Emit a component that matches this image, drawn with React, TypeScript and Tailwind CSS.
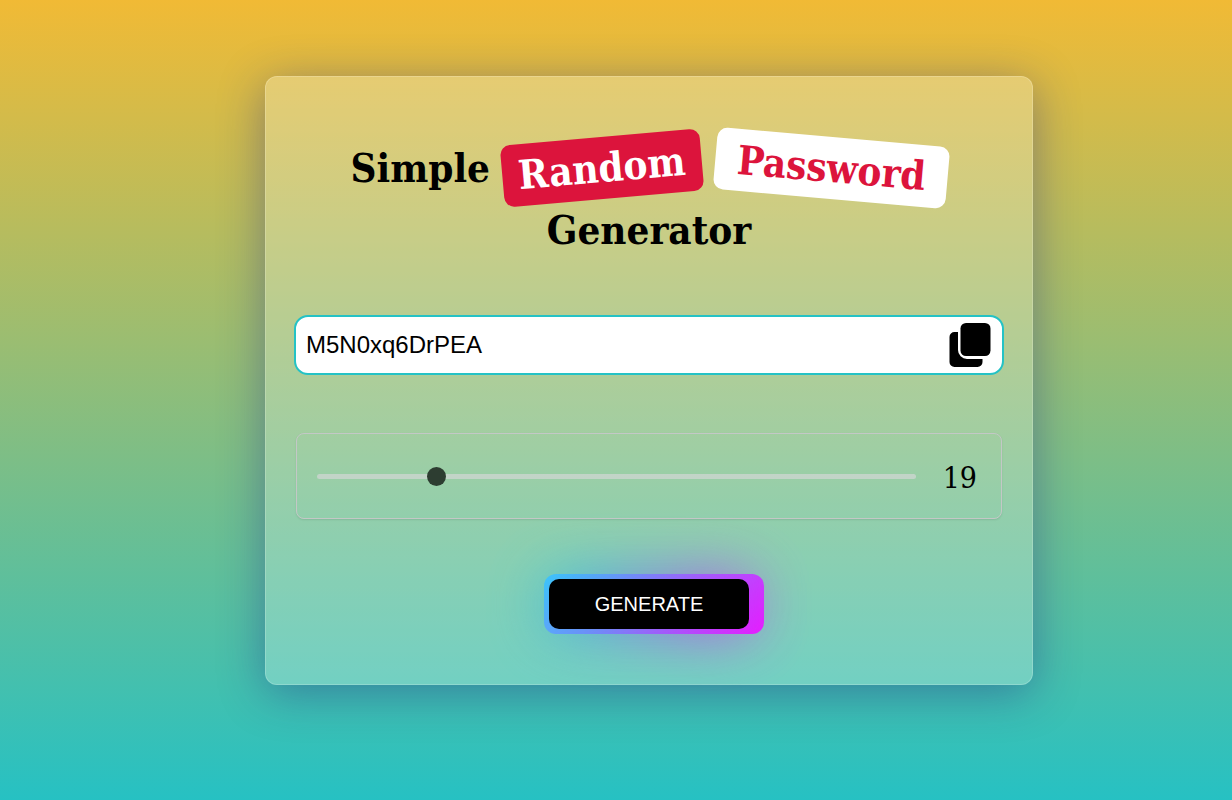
import { useState } from "react";

const CHARACTERS =
  "ABCDEFGHIJKLMNOPQRSTUVWXYZabcdefghijklmnopqrstuvwxyz0123456789";

function createPassword(length: number) {
  return Array.from(
    { length },
    () => CHARACTERS[Math.floor(Math.random() * CHARACTERS.length)],
  ).join("");
}

function CopyIcon() {
  return (
    <svg viewBox="0 0 42 44" className="h-11 w-[42px]" fill="currentColor" aria-hidden="true">
      <rect x="11.500" y="0" width="30" height="33" rx="5.500" />
      <path d="M9 9H5.500a5 5 0 0 0-5 5v25a5 5 0 0 0 5 5h23a5 5 0 0 0 5-5v-3H18a9 9 0 0 1-9-9z" />
    </svg>
  );
}

function Title() {
  return (
    <h1 className="text-center font-['DejaVu_Serif_Condensed','DejaVu_Serif',serif] text-[40px] leading-[62px] font-bold text-black">
      Simple{" "}
      <span className="inline-block -rotate-5 rounded-[10px] bg-[#dc143c] px-4 text-white">
        Random
      </span>{" "}
      <span className="inline-block rotate-5 rounded-[10px] bg-white px-[22px] text-[#dc143c]">
        Password
      </span>{" "}
      Generator
    </h1>
  );
}

export default function App() {
  const [length, setLength] = useState(19);
  const [password, setPassword] = useState("M5N0xq6DrPEA");

  return (
    <div className="flex min-h-screen items-start justify-center bg-[linear-gradient(180deg,#f1ba35,#26c1c3)] pt-[76px] pb-10 pl-[66px] font-['Liberation_Sans',Arial,sans-serif]">
      <main className="w-full max-w-3xl rounded-xl border border-white/20 bg-white/25 px-7 pt-[60px] pb-[50px] shadow-[0_8px_46px_rgba(31,38,135,0.42)]">
        <Title />

        <div className="mt-[54px] flex h-[60px] items-center rounded-[14px] border-2 border-[#24c2c5] bg-white pr-[11px]">
          <input
            type="text"
            readOnly
            aria-label="Generated password"
            value={password}
            className="h-full min-w-0 flex-1 rounded-[14px] bg-transparent px-[10px] text-2xl text-black outline-none"
          />
          <button
            type="button"
            aria-label="Copy password"
            onClick={() => navigator.clipboard?.writeText(password)}
            className="text-black"
          >
            <CopyIcon />
          </button>
        </div>

        <div className="mx-[2px] mt-[58px] flex h-[86px] items-center rounded-lg border border-[#c3c8c6] pr-6 pl-5 shadow-[0_1px_2px_rgba(0,0,0,0.1)]">
          <input
            id="length"
            type="range"
            min={0}
            max={100}
            value={length}
            aria-label="Password length"
            onChange={(event) => setLength(Number(event.target.value))}
            className="h-[5px] min-w-0 flex-1 appearance-none rounded-[5px] bg-[#d3d7d6] opacity-70 outline-none [&::-webkit-slider-thumb]:size-[19px] [&::-webkit-slider-thumb]:appearance-none [&::-webkit-slider-thumb]:rounded-full [&::-webkit-slider-thumb]:bg-black"
          />
          <output
            htmlFor="length"
            className="w-[61px] pt-1 text-right font-['DejaVu_Serif_Condensed','DejaVu_Serif',serif] text-[30px] leading-9 text-black"
          >
            {length}
          </output>
        </div>

        <div className="mt-[55px] flex justify-center pl-[10px]">
          <div className="relative isolate rounded-xl bg-[linear-gradient(-45deg,#e81cff_0%,#40c9ff_100%)] py-[5px] pr-[15px] pl-[5px]">
            <span className="absolute inset-y-[5px] right-[15px] left-[5px] -z-10 bg-[linear-gradient(-45deg,#fc00ff_0%,#00dbde_100%)] opacity-85 blur-[30px]" />
            <button
              type="button"
              onClick={() => setPassword(createPassword(length))}
              className="h-[50px] w-[200px] rounded-[10px] bg-black text-xl text-white"
            >
              GENERATE
            </button>
          </div>
        </div>
      </main>
    </div>
  );
}
